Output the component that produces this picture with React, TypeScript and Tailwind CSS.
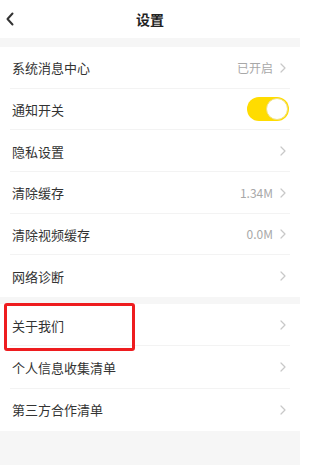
import React from "react";

const font = { fontFamily: '"Noto Sans CJK SC", "Noto Sans", sans-serif' };

function Chevron() {
  return (
    <svg width="6" height="10" viewBox="0 0 6 10" className="ml-[7px]">
      <path d="M1 1 L5 5 L1 9" fill="none" stroke="#c8c8c8" strokeWidth="1.2" strokeLinecap="round" strokeLinejoin="round" />
    </svg>
  );
}

function Row({ label, value, toggle, last, h }: { label: string; value?: string; toggle?: boolean; last?: boolean; h: string }) {
  return (
    <div className={`relative flex items-center justify-between pl-[12px] pr-[14px] ${h}`}>
      <span className="text-[13px] text-[#333333] leading-none">{label}</span>
      {toggle ? (
        <div className="w-[42px] h-[24px] rounded-full bg-[#ffdc00] flex items-center justify-end pr-[1px] mr-[-3px]">
          <div className="w-[22px] h-[22px] rounded-full bg-white border border-[#f0e080]" />
        </div>
      ) : (
        <div className="flex items-center">
          {value && <span className="text-[12px] text-[#a8a8a8] leading-none">{value}</span>}
          <Chevron />
        </div>
      )}
      {!last && <div className="absolute bottom-0 left-[10px] right-[10px] h-px bg-[#f3f3f3]" />}
    </div>
  );
}

export default function App() {
  return (
    <div className="w-[300px] h-[465px] bg-[#f6f6f6] flex flex-col" style={font}>
      <div className="h-[38px] bg-white flex items-center relative">
        <svg width="10" height="14" viewBox="0 0 10 14" className="absolute left-[5px] top-[12px]">
          <path d="M7.5 1.5 L2.5 7 L7.5 12.5" fill="none" stroke="#333" strokeWidth="2" strokeLinecap="round" strokeLinejoin="round" />
        </svg>
        <div className="flex-1 text-center text-[14px] font-bold text-[#222] leading-none">设置</div>
      </div>
      <div className="h-[9px]" />
      <div className="bg-white flex flex-col">
        <Row h="h-[41.67px]" label="系统消息中心" value="已开启" />
        <Row h="h-[41.67px]" label="通知开关" toggle />
        <Row h="h-[41.67px]" label="隐私设置" />
        <Row h="h-[41.67px]" label="清除缓存" value="1.34M" />
        <Row h="h-[41.67px]" label="清除视频缓存" value="0.0M" />
        <Row h="h-[41.67px]" label="网络诊断" last />
      </div>
      <div className="h-[7px]" />
      <div className="bg-white flex flex-col relative">
        <div className="absolute left-[4px] top-[-1px] w-[131px] h-[48px] border-[3px] border-[#ee1c1f] rounded-[3px] z-10" />
        <Row h="h-[42.3px]" label="关于我们" />
        <Row h="h-[42.3px]" label="个人信息收集清单" />
        <Row h="h-[42.3px]" label="第三方合作清单" last />
      </div>
    </div>
  );
}
